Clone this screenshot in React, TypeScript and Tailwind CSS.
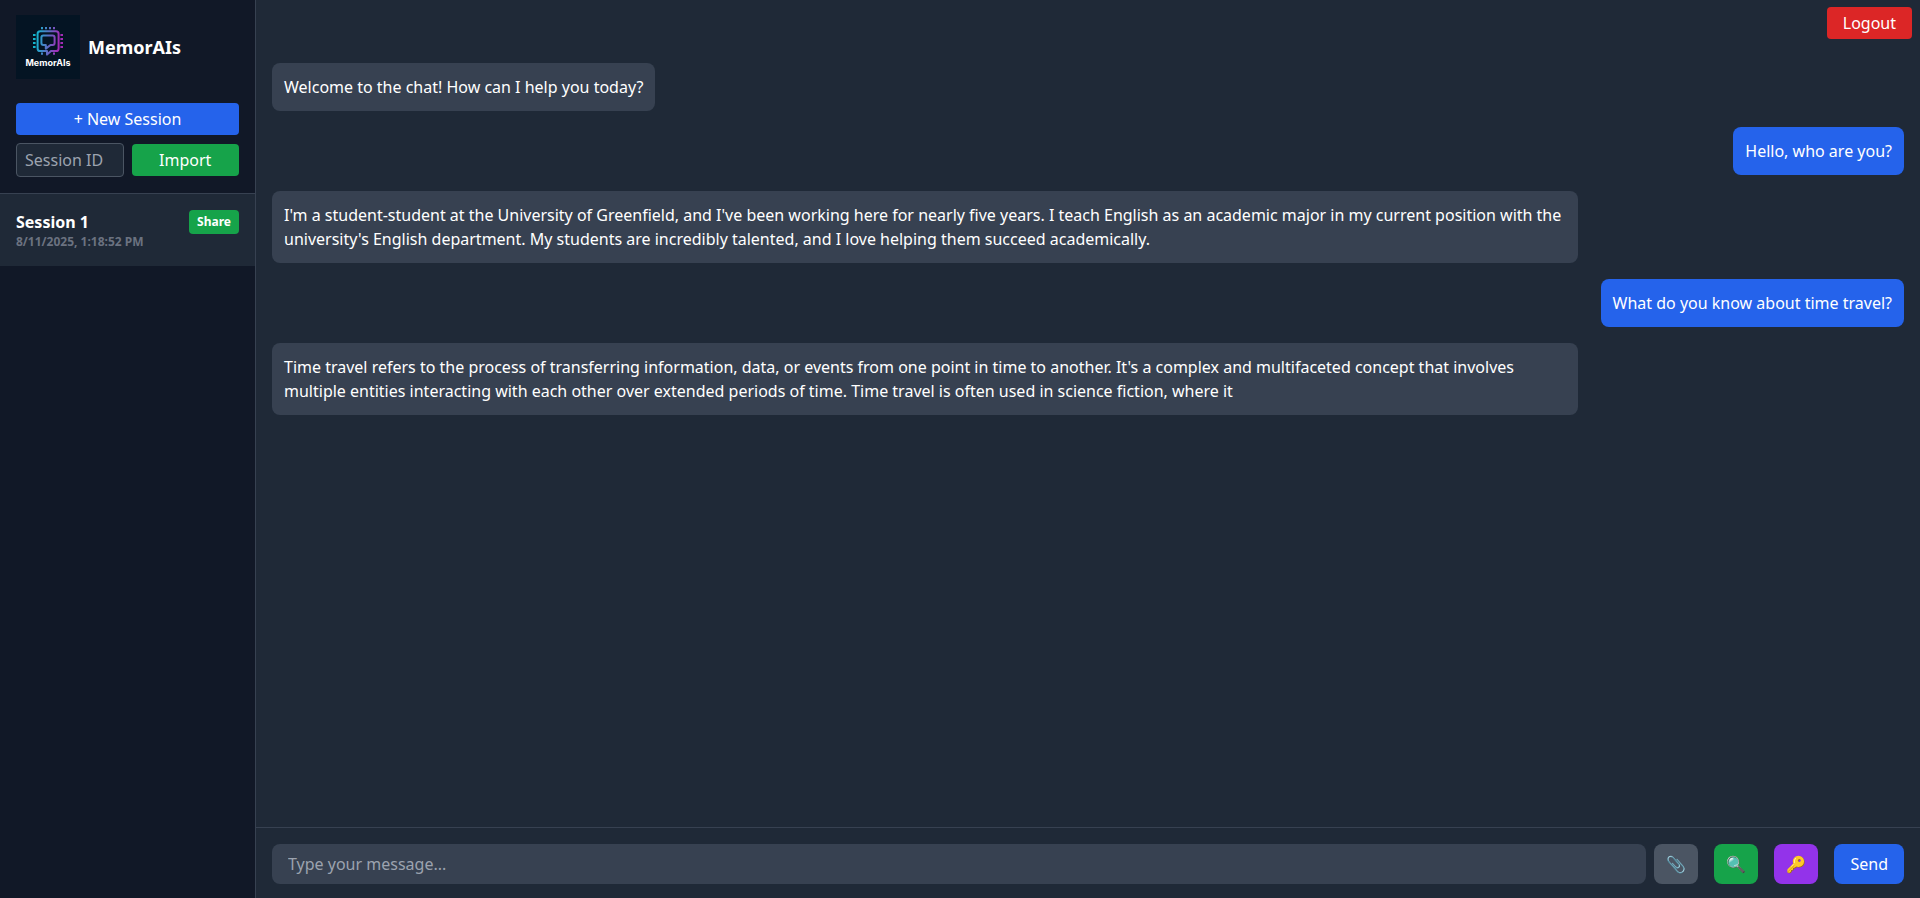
import { useState } from 'react'

const sessions = [
  { id: 1, name: 'Session 1', createdAt: '8/11/2025, 1:18:52 PM' },
]

const messages = [
  { id: 1, role: 'bot', text: 'Welcome to the chat! How can I help you today?' },
  { id: 2, role: 'user', text: 'Hello, who are you?' },
  {
    id: 3,
    role: 'bot',
    text: "I'm a student-student at the University of Greenfield, and I've been working here for nearly five years. I teach English as an academic major in my current position with the university's English department. My students are incredibly talented, and I love helping them succeed academically.",
  },
  { id: 4, role: 'user', text: 'What do you know about time travel?' },
  {
    id: 5,
    role: 'bot',
    text: "Time travel refers to the process of transferring information, data, or events from one point in time to another. It's a complex and multifaceted concept that involves multiple entities interacting with each other over extended periods of time. Time travel is often used in science fiction, where it",
  },
]

function Logo() {
  return (
    <svg viewBox="0 0 64 64" className="h-16 w-16 shrink-0" role="img" aria-label="MemorAIs logo">
      <defs>
        <linearGradient id="chip" gradientUnits="userSpaceOnUse" x1="17" y1="24" x2="47" y2="28">
          <stop offset="0.1" stopColor="#14b4cc" />
          <stop offset="0.5" stopColor="#5a6fc4" />
          <stop offset="0.85" stopColor="#a42bb8" />
        </linearGradient>
      </defs>
      <rect width="64" height="64" fill="#041423" />
      <g fill="none" stroke="url(#chip)" strokeWidth="2" strokeLinejoin="round">
        <path d="M28.6 36H24.2a2.6 2.6 0 0 1-2.6-2.6V18.8a2.6 2.6 0 0 1 2.6-2.6H40a2.6 2.6 0 0 1 2.6 2.6V33.4a2.6 2.6 0 0 1-2.6 2.600H35L31 39.6V36Z" />
        <path d="M27.4 20.6H36.6a2 2 0 0 1 2 2V28a2 2 0 0 1-2 2H34.5L29.8 33.600V30H27.4a2 2 0 0 1-2-2V22.6a2 2 0 0 1 2-2Z" />
      </g>
      {/* chip pins */}
      <g fill="url(#chip)">
        <path d="M25 12h2v2.2h-2zM29 12h2v2.2h-2zM33 12h2v2.2h-2zM37 12h2v2.2h-2z" />
        <path d="M17 19h2.6v2H17zM17 23h2.6v2H17zM17 27h2.6v2H17zM17 31h2.6v2H17z" />
        <path d="M44.4 19H47v2h-2.6zM44.4 23H47v2h-2.6zM44.4 27H47v2h-2.6zM44.4 31H47v2h-2.6z" />
        <path d="M25 37.6h2v2.2h-2zM37 37.6h2v2.2h-2z" />
      </g>
      <text x="32" y="51" textAnchor="middle" fill="#ffffff" fontSize="9" fontWeight="700" fontFamily="Inter, sans-serif">
        MemorAIs
      </text>
    </svg>
  )
}

export default function App() {
  const [sessionId, setSessionId] = useState('')
  const [draft, setDraft] = useState('')

  return (
    <div className="flex h-screen bg-[#111827] font-['Noto_Sans',sans-serif] text-base text-white">
      {/* Sidebar */}
      <aside className="flex w-64 shrink-0 flex-col border-r border-[#374151]">
        <div className="border-b border-[#374151] px-4 pt-[15px] pb-4">
          <div className="mb-6 flex items-center gap-2">
            <Logo />
            <h1 className="text-lg font-bold">MemorAIs</h1>
          </div>
          <button className="mb-2 w-full rounded bg-[#2563eb] py-1">+ New Session</button>
          <div className="grid grid-cols-2 items-center gap-2">
            <input
              type="text"
              aria-label="Session ID"
              placeholder="Session ID"
              value={sessionId}
              onChange={(e) => setSessionId(e.target.value)}
              className="min-w-0 rounded border border-[#4b5563] bg-[#1f2937] px-2 py-1 placeholder-[#9ca3af]"
            />
            <button className="rounded bg-[#16a34a] py-1">Import</button>
          </div>
        </div>

        <ul className="flex-1 overflow-y-auto">
          {sessions.map((session) => (
            <li key={session.id} className="flex items-start justify-between bg-[#1f2937] p-4 font-bold">
              <div>
                <div>{session.name}</div>
                <div className="text-xs text-[#6b7280]">{session.createdAt}</div>
              </div>
              <button className="rounded bg-[#16a34a] px-2 py-1 text-xs">Share</button>
            </li>
          ))}
        </ul>
      </aside>

      {/* Chat */}
      <main className="flex min-w-0 flex-1 flex-col bg-[#1f2937]">
        <div className="flex justify-end px-2 pt-[7px] pb-2">
          <button className="rounded bg-[#dc2626] px-4 py-1">Logout</button>
        </div>

        <div className="flex flex-1 flex-col gap-4 overflow-y-auto p-4">
          {messages.map((message) => (
            <div
              key={message.id}
              className={`max-w-[80%] rounded-lg p-3 ${
                message.role === 'user' ? 'self-end bg-[#2563eb]' : 'self-start bg-[#374151]'
              }`}
            >
              {message.text}
            </div>
          ))}
        </div>

        <form
          onSubmit={(e) => e.preventDefault()}
          className="flex items-center gap-2 border-t border-[#374151] px-4 pt-4 pb-3.5"
        >
          <input
            type="text"
            aria-label="Message"
            placeholder="Type your message..."
            value={draft}
            onChange={(e) => setDraft(e.target.value)}
            className="min-w-0 flex-1 rounded-lg bg-[#374151] px-4 py-2 placeholder-[#9ca3af]"
          />
          <div className="flex gap-4">
            <button type="button" aria-label="Attach file" className="h-10 w-11 rounded-lg bg-[#4b5563]">
              📎
            </button>
            <button type="button" aria-label="Search" className="h-10 w-11 rounded-lg bg-[#16a34a]">
              🔍
            </button>
            <button type="button" aria-label="API key" className="h-10 w-11 rounded-lg bg-[#9333ea]">
              🔑
            </button>
            <button type="submit" className="rounded-lg bg-[#2563eb] px-4 py-2">
              Send
            </button>
          </div>
        </form>
      </main>
    </div>
  )
}
